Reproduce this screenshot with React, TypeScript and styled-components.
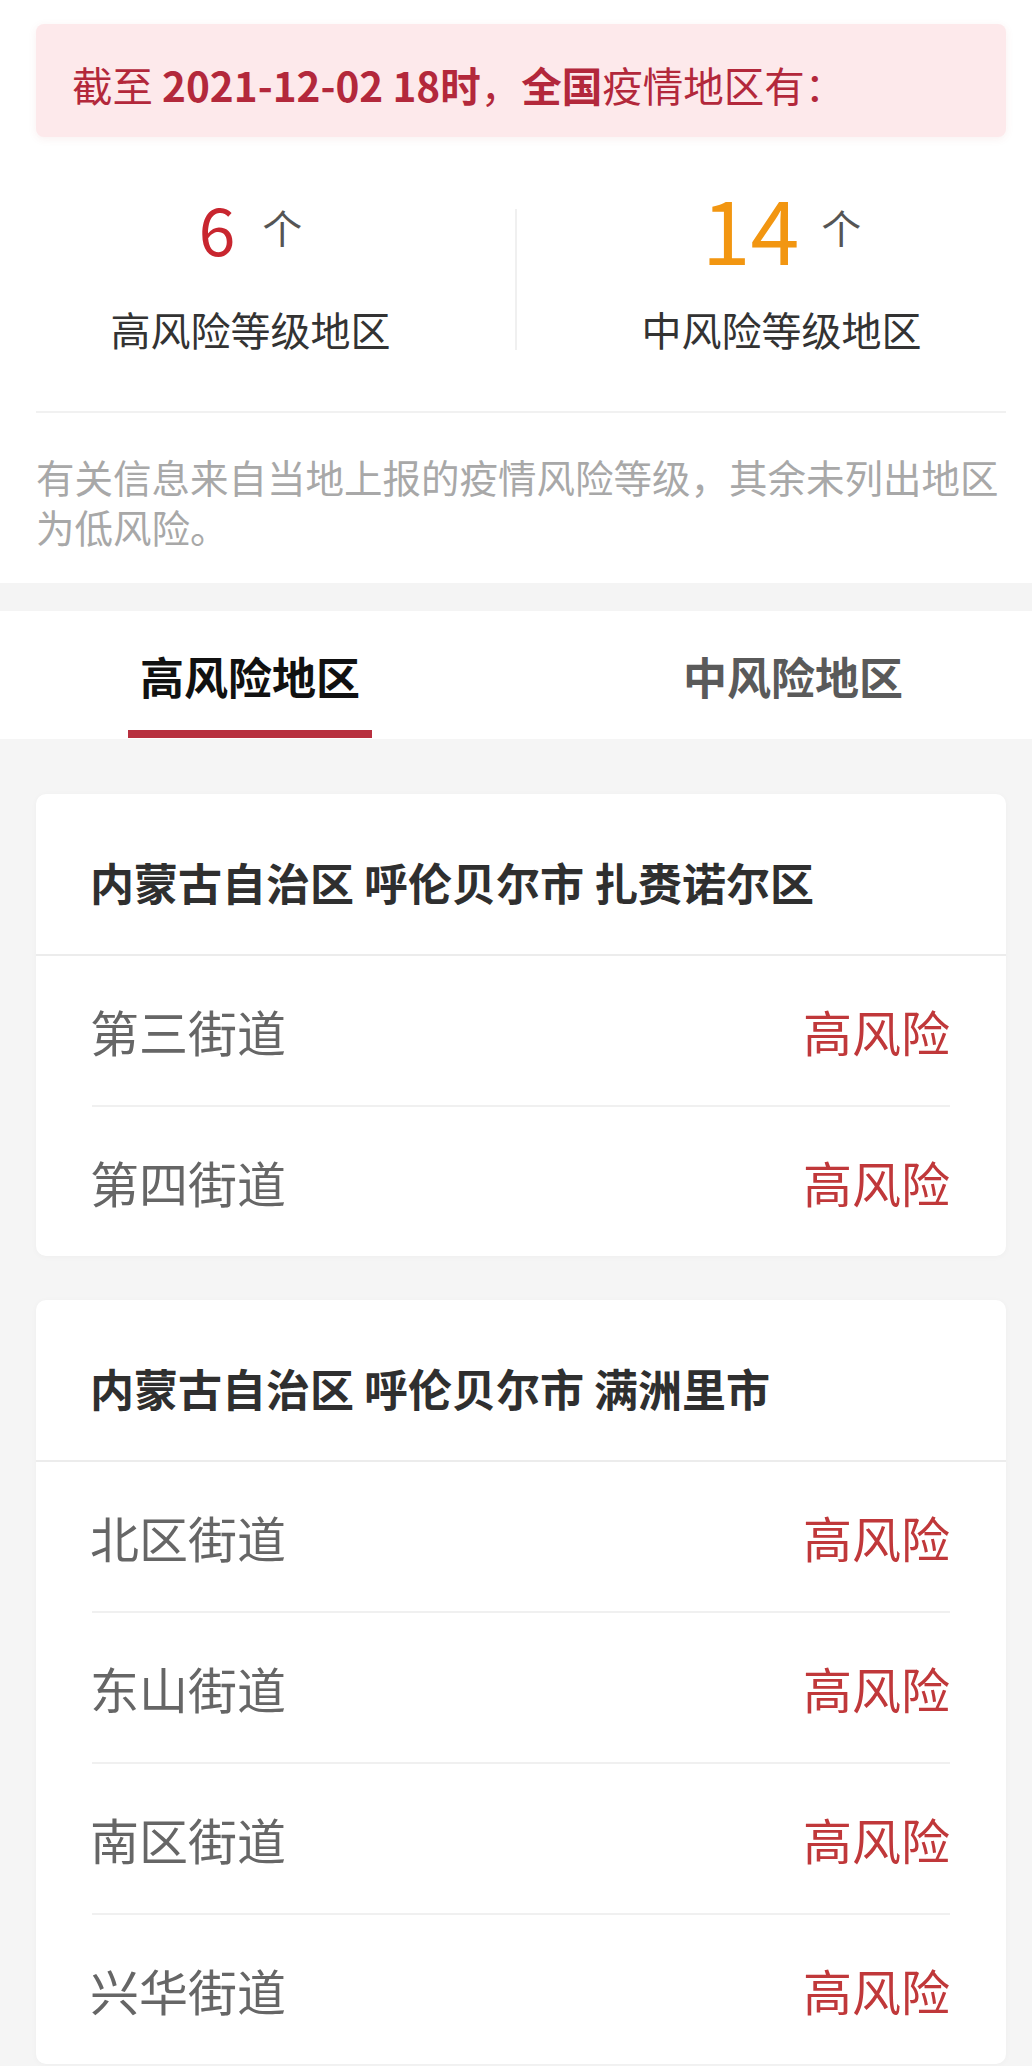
import React from "react";
import styled, { createGlobalStyle } from "styled-components";

const GlobalStyle = createGlobalStyle`
  * { box-sizing: border-box; }
  html, body {
    margin: 0;
    padding: 0;
    background: #f5f5f5;
    font-family: "Noto Sans CJK SC", "Noto Sans", sans-serif;
  }
`;

const Page = styled.div`
  width: 1032px;
  min-height: 2066px;
  background: #f5f5f5;
`;

const TopSection = styled.section`
  background: #ffffff;
  padding: 24px 26px 32px 36px;
`;

const Banner = styled.div`
  height: 113px;
  padding: 9px 36px 0 36px;
  display: flex;
  align-items: center;
  background: #fde9eb;
  border-radius: 8px;
  box-shadow: 0 2px 8px rgba(180, 60, 70, 0.08);
  color: #b3283b;
  font-size: 40.5px;
  line-height: 50px;
  white-space: nowrap;
`;

const Strong = styled.span`
  font-weight: 700;
`;

const StatsGrid = styled.div`
  margin-top: 50px;
  padding: 0 10px 57px 0;
  display: grid;
  grid-template-columns: 1fr 2px 1fr;
  column-gap: 50px;
  border-bottom: 2px solid #f1f1f1;
`;

const StatCol = styled.div`
  display: flex;
  flex-direction: column;
  align-items: center;
`;

const NumberRow = styled.div<{ $gap: number }>`
  height: 80px;
  display: flex;
  align-items: center;
  justify-content: center;
  gap: ${(p) => p.$gap}px;
`;

const BigNum = styled.span<{ $color: string; $size: number }>`
  font-size: ${(p) => p.$size}px;
  line-height: 1;
  color: ${(p) => p.$color};
  font-weight: 400;
`;

const Unit = styled.span`
  font-size: 40px;
  line-height: 1;
  color: #555555;
`;

const StatLabel = styled.div`
  margin-top: 37px;
  font-size: 40px;
  line-height: 50px;
  color: #333333;
`;

const VDivider = styled.div`
  align-self: start;
  margin-top: 22px;
  width: 2px;
  height: 141px;
  background: #f0f0f0;
`;

const Note = styled.p`
  margin: 38px 0 0 0;
  font-size: 38.5px;
  line-height: 50px;
  color: #a8a8a8;
`;

const Band = styled.div`
  height: 28px;
  background: #f4f4f4;
`;

const TabBar = styled.nav`
  height: 128px;
  background: #ffffff;
  display: flex;
  padding-left: 128px;
  gap: 299px;
`;

const Tab = styled.div`
  width: 244px;
  height: 128px;
  padding-top: 35px;
  display: flex;
  flex-direction: column;
  align-items: center;
`;

const TabLabel = styled.span<{ $active?: boolean }>`
  font-size: 44px;
  line-height: 60px;
  font-weight: 700;
  color: ${(p) => (p.$active ? "#111111" : "#5a5a5a")};
`;

const TabUnderline = styled.span<{ $active?: boolean }>`
  margin-top: 24px;
  width: 244px;
  height: 8px;
  background: ${(p) => (p.$active ? "#b8303f" : "transparent")};
`;

const Cards = styled.div`
  padding: 55px 26px 0 36px;
  display: flex;
  flex-direction: column;
  gap: 44px;
`;

const Card = styled.div`
  background: #ffffff;
  border-radius: 10px;
  box-shadow: 0 1px 6px rgba(0, 0, 0, 0.03);
  overflow: hidden;
`;

const CardHeader = styled.div`
  padding: 58px 54px 42px 54px;
  font-size: 44px;
  line-height: 60px;
  font-weight: 700;
  color: #2f2f2f;
  border-bottom: 2px solid #ececec;
  white-space: nowrap;
`;

const Row = styled.div`
  margin: 0 56px 0 56px;
  height: 151px;
  display: flex;
  align-items: center;
  justify-content: space-between;
  font-size: 49px;
  line-height: 60px;
  & + & {
    border-top: 2px solid #f0f0f0;
  }
  &:first-child {
    height: 149px;
  }
`;

const Street = styled.span`
  margin-left: -2px;
  color: #666666;
`;

const Risk = styled.span`
  color: #c0383a;
`;

type Area = { title: string; streets: string[] };

const areas: Area[] = [
  { title: "内蒙古自治区 呼伦贝尔市 扎赉诺尔区", streets: ["第三街道", "第四街道"] },
  { title: "内蒙古自治区 呼伦贝尔市 满洲里市", streets: ["北区街道", "东山街道", "南区街道", "兴华街道"] },
];

export default function App() {
  return (
    <Page>
      <GlobalStyle />
      <TopSection>
        <Banner>
          截至&nbsp;<Strong>2021-12-02 18时</Strong>，<Strong>全国</Strong>疫情地区有：
        </Banner>
        <StatsGrid>
          <StatCol>
            <NumberRow $gap={27}>
              <BigNum $color="#c8262f" $size={66}>6</BigNum>
              <Unit>个</Unit>
            </NumberRow>
            <StatLabel>高风险等级地区</StatLabel>
          </StatCol>
          <VDivider />
          <StatCol>
            <NumberRow $gap={22}>
              <BigNum $color="#f29611" $size={88}>14</BigNum>
              <Unit>个</Unit>
            </NumberRow>
            <StatLabel>中风险等级地区</StatLabel>
          </StatCol>
        </StatsGrid>
        <Note>有关信息来自当地上报的疫情风险等级，其余未列出地区为低风险。</Note>
      </TopSection>
      <Band />
      <TabBar>
        <Tab>
          <TabLabel $active>高风险地区</TabLabel>
          <TabUnderline $active />
        </Tab>
        <Tab>
          <TabLabel>中风险地区</TabLabel>
          <TabUnderline />
        </Tab>
      </TabBar>
      <Cards>
        {areas.map((a) => (
          <Card key={a.title}>
            <CardHeader>{a.title}</CardHeader>
            <div>
              {a.streets.map((s) => (
                <Row key={s}>
                  <Street>{s}</Street>
                  <Risk>高风险</Risk>
                </Row>
              ))}
            </div>
          </Card>
        ))}
      </Cards>
    </Page>
  );
}
